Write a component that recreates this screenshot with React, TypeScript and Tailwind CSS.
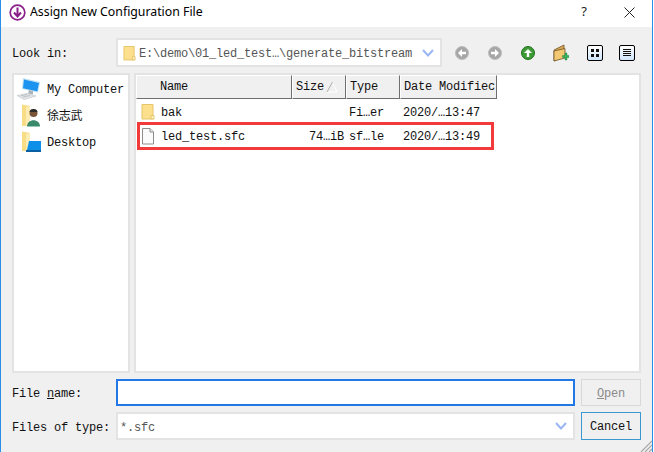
import React from 'react';

const mono = { fontFamily: '"Liberation Mono", "Noto Sans CJK SC", monospace' };
const ui = { fontFamily: '"Noto Sans", sans-serif' };

const FolderIcon = ({ className = '' }: { className?: string }) => (
  <svg viewBox="0 0 14 17" className={className}>
    <path d="M1 1.500 H12 V16 H1 Z" fill="#fde08e" stroke="#e6c468" />
    <path d="M10 16 V12.500 H13 V16 Z" fill="#fff3c4" stroke="#e6c468" />
  </svg>
);

const FileIcon = () => (
  <svg viewBox="0 0 14 17" className="w-[14px] h-[17px]">
    <path d="M1.500 .5 H9 L12.500 4 V16 H1.500 Z" fill="#fbfbfb" stroke="#8d8d8d" />
    <path d="M9 .5 V4 H12.500" fill="#e8e8e8" stroke="#8d8d8d" />
  </svg>
);

const ComputerIcon = () => (
  <svg viewBox="0 0 25 22" className="w-[25px] h-[22px]">
    <path d="M7 0 L24 4 L22 14.500 L6 11 Z" fill="#bfe0f5" />
    <path d="M8 1.500 L23 5 L21.300 13.300 L7 10.200 Z" fill="#1c93ee" />
    <path d="M13 12 L17 13 L17 16.500 L12 15.500 Z" fill="#aeb5ba" />
    <path d="M1 17.500 L11 15.500 L20 18 L8 21.500 Z" fill="#e2e5e7" stroke="#b4babe" strokeWidth=".5" />
    <path d="M5 17.800 L11 16.500 M7 19 L14 17.500" stroke="#a4abb0" strokeWidth=".6" />
  </svg>
);

const UserFolderIcon = () => (
  <svg viewBox="0 0 20 23" className="w-[20px] h-[23px]">
    <path d="M1 .5 L9 2 V22 H1 Z" fill="#f9dc86" />
    <path d="M9 2 V22 H5 V3 Z" fill="#fdedb4" />
    <circle cx="12.500" cy="9" r="4" fill="#7a5438" />
    <path d="M8.500 8 C9 4 16 4 16.500 8 Z" fill="#2c2c2c" />
    <path d="M6 22.500 C6 14 19 14 19 22.500 Z" fill="#39896a" />
  </svg>
);

const DesktopFolderIcon = () => (
  <svg viewBox="0 0 20 22" className="w-[20px] h-[22px]">
    <path d="M1 .5 L9 2 V20 H1 Z" fill="#f9dc86" />
    <path d="M9 2 V20 H5 V3 Z" fill="#fdedb4" />
    <path d="M8 10 H20 V19 H6 Z" fill="#0f90e8" />
    <path d="M5 19 H20 V21 H5 Z" fill="#0a5fa0" />
  </svg>
);

const NavIcon = ({ dir, bg, edge }: { dir: 'left' | 'right' | 'up'; bg: string; edge: string }) => {
  const rotate = dir === 'left' ? 180 : dir === 'up' ? -90 : 0;
  return (
    <svg viewBox="0 0 14 14" className="w-[14px] h-[14px]">
      <circle cx="7" cy="7" r="6.500" fill={bg} stroke={edge} />
      <path
        d="M3 5.800 H7 V3 L11 7 L7 11 V8.200 H3 Z"
        fill="#fff"
        transform={`rotate(${rotate} 7 7)`}
      />
    </svg>
  );
};

const NewFolderIcon = () => (
  <svg viewBox="0 0 16 18" className="w-[16px] h-[18px]">
    <path d="M1 6 L11 1 V12 L1 17 Z" fill="#d9a653" stroke="#6e5226" strokeWidth=".8" />
    <path d="M1 7 L12 4.500 V14 L1 17 Z" fill="#f3c873" stroke="#6e5226" strokeWidth=".8" />
    <path d="M9.500 11.500 H12 V9 H14 V11.500 H16 V13.500 H14 V16 H12 V13.500 H9.500 Z" fill="#35b45a" stroke="#1c7c3a" strokeWidth=".4" />
  </svg>
);

const ToolButton = ({ children }: { children: React.ReactNode }) => (
  <div className="w-[16px] h-[16px] rounded-[2px] border border-black bg-gradient-to-b from-white to-[#cfe6fb] flex items-center justify-center">
    {children}
  </div>
);

const Chevron = () => (
  <svg viewBox="0 0 12 8" className="w-[12px] h-[8px]">
    <path d="M1 1 L6 6.500 L11 1" fill="none" stroke="#9ab6f5" strokeWidth="2" />
  </svg>
);

const HeaderCell = ({ className, children }: { className: string; children: React.ReactNode }) => (
  <div className={`h-[24px] bg-[#f0f0f0] border border-t-white border-l-white border-r-[#6f6f6f] border-b-[#6f6f6f] flex items-center overflow-hidden whitespace-nowrap ${className}`}>
    {children}
  </div>
);

const PlaceRow = ({ icon, label }: { icon: React.ReactNode; label: string }) => (
  <div className="flex items-center">
    <div className="w-[33px] flex justify-end pr-[6px]">{icon}</div>
    <span className="text-[#101010] pt-[2px]">{label}</span>
  </div>
);

const App = () => {
  return (
    <div className="w-[654px] h-[452px] bg-white">
      <div
        className="w-[653px] h-[452px] bg-[#f0f0f0] border-l border-r border-[#2a8fe6] text-[12px] tracking-[-0.2px] text-[#111] flex flex-col overflow-hidden relative"
        style={mono}
      >
        {/* title bar */}
        <div className="h-[27px] bg-white flex items-center shrink-0 pl-[8px] pb-[2px] tracking-normal">
          <svg viewBox="0 0 17 17" className="w-[17px] h-[17px]">
            <circle cx="8.500" cy="8.500" r="7.300" fill="none" stroke="#8a1f8a" strokeWidth="1.700" />
            <path d="M8.500 3.500 V12 M5 8.500 L8.500 12.500 L12 8.500" fill="none" stroke="#8a1f8a" strokeWidth="2" />
          </svg>
          <span className="ml-[4px] text-[12.3px] text-black" style={ui}>
            Assign New Configuration File
          </span>
          <span className="ml-auto mr-[37px] text-[13px] text-[#222] pb-[1px]" style={ui}>?</span>
          <svg viewBox="0 0 11 11" className="w-[11px] h-[11px] mr-[17px] mb-[1px]">
            <path d="M.5 .5 L10.500 10.500 M10.500 .5 L.5 10.500" stroke="#222" strokeWidth="1" />
          </svg>
        </div>

        {/* look in */}
        <div className="flex items-center mt-[11px] pl-[11px] h-[29px] shrink-0">
          <span className="w-[104px] pt-[2px]">Look in:</span>
          <div className="w-[326px] h-[29px] bg-white border-2 border-[#e3e3e3] flex items-center pl-[5px] pr-[6px]">
            <FolderIcon className="w-[13px] h-[18px]" />
            <span className="ml-[3px] text-[#555] whitespace-nowrap pt-[2px]">E:\demo\01_led_test…\generate_bitstream</span>
            <div className="ml-auto"><Chevron /></div>
          </div>
          <div className="flex items-center ml-[13px]">
            <NavIcon dir="left" bg="#a6a6a6" edge="#bdbdbd" />
            <div className="w-[19px]" />
            <NavIcon dir="right" bg="#a6a6a6" edge="#bdbdbd" />
            <div className="w-[19px]" />
            <NavIcon dir="up" bg="#3d9a35" edge="#23701f" />
            <div className="w-[18px]" />
            <NewFolderIcon />
            <div className="w-[18px]" />
            <ToolButton>
              <svg viewBox="0 0 10 10" className="w-[10px] h-[10px]">
                <path d="M1 1 H4 V4 H1 Z M6 1 H9 V4 H6 Z M1 6 H4 V9 H1 Z M6 6 H9 V9 H6 Z" fill="#111" />
              </svg>
            </ToolButton>
            <div className="w-[16px]" />
            <ToolButton>
              <svg viewBox="0 0 10 10" className="w-[10px] h-[10px]">
                <path d="M1 1.500 H9 M1 3.500 H9 M1 5.500 H9 M1 7.500 H9" stroke="#111" strokeWidth="1" />
              </svg>
            </ToolButton>
          </div>
        </div>

        {/* panes */}
        <div className="flex mt-[6px] pl-[11px] h-[300px] shrink-0 gap-[4px]">
          <div className="w-[118px] bg-white border-2 border-[#e3e3e3] pt-[3px] overflow-hidden flex flex-col gap-[4px]">
            <PlaceRow icon={<ComputerIcon />} label="My Computer" />
            <PlaceRow icon={<UserFolderIcon />} label="徐志武" />
            <PlaceRow icon={<DesktopFolderIcon />} label="Desktop" />
          </div>
          <div className="w-[507px] bg-white border-2 border-[#e3e3e3] flex flex-col">
            <div className="flex shrink-0">
              <HeaderCell className="w-[156px] pl-[23px]">Name</HeaderCell>
              <HeaderCell className="w-[54px] pl-[3px] relative">
                Size
                <svg viewBox="0 0 12 12" className="w-[12px] h-[12px] absolute left-[33px] top-[5px]">
                  <path d="M1 11 H11 L6.500 1" fill="none" stroke="#fff" />
                  <path d="M6.500 1 L1 11" stroke="#b0b0b0" />
                </svg>
              </HeaderCell>
              <HeaderCell className="w-[54px] pl-[3px]">Type</HeaderCell>
              <HeaderCell className="w-[97px] pl-[3px]">Date Modifiec</HeaderCell>
            </div>
            <div className="flex items-center h-[25px] shrink-0">
              <div className="w-[156px] flex items-center pl-[5px]">
                <FolderIcon className="w-[14px] h-[17px]" />
                <span className="ml-[6px] pt-[2px]">bak</span>
              </div>
              <div className="w-[54px]" />
              <div className="w-[54px] pl-[3px] pt-[2px] whitespace-nowrap">Fi…er</div>
              <div className="w-[97px] pl-[3px] pt-[2px] whitespace-nowrap">2020/…13:47</div>
            </div>
            <div className="flex items-center h-[24px] shrink-0 relative">
              <div className="w-[156px] flex items-center pl-[5px]">
                <FileIcon />
                <span className="ml-[6px] pt-[2px]">led_test.sfc</span>
              </div>
              <div className="w-[54px] text-right pr-[2px] pt-[2px] whitespace-nowrap">74…iB</div>
              <div className="w-[54px] pl-[3px] pt-[2px] whitespace-nowrap">sf…le</div>
              <div className="w-[97px] pl-[3px] pt-[2px] whitespace-nowrap">2020/…13:49</div>
              <div className="absolute left-[1px] top-[-2px] w-[357px] h-[28px] border-[3px] border-[#f33a3a]" />
            </div>
          </div>
        </div>

        {/* file name row */}
        <div className="flex items-center mt-[6px] pl-[11px] h-[27px] shrink-0">
          <span className="w-[104px] pt-[2px]">File <span className="underline">n</span>ame:</span>
          <div className="w-[459px] h-[27px] bg-white border-2 border-[#2277e6]" />
          <div className="w-[60px] h-[27px] ml-[6px] border border-[#d8d8d8] flex items-center justify-center text-[#8a8a8a] pt-[2px]">
            <span><span className="underline">O</span>pen</span>
          </div>
        </div>

        {/* type row */}
        <div className="flex items-center mt-[6px] pl-[11px] h-[28px] shrink-0">
          <span className="w-[104px] pt-[4px]">Files of type:</span>
          <div className="w-[459px] h-[28px] bg-white border-2 border-[#e3e3e3] flex items-center pl-[2px] pr-[6px] text-[#555]">
            <span className="pt-[4px]">*.sfc</span>
            <div className="ml-auto"><Chevron /></div>
          </div>
          <div className="w-[60px] h-[28px] ml-[6px] border border-[#3c97d3] flex items-center justify-center pt-[2px]">
            Cancel
          </div>
        </div>

        {/* resize grip */}
        <svg viewBox="0 0 13 13" className="w-[13px] h-[13px] absolute right-0 bottom-0">
          <path d="M13 2 L2 13 M13 6 L6 13 M13 10 L10 13" stroke="#a8a8a8" strokeWidth="1.200" />
        </svg>
      </div>
    </div>
  );
};

export default App;
